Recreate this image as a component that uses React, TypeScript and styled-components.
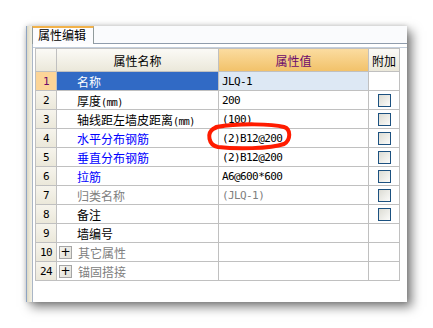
import React from "react";
import styled, { createGlobalStyle } from "styled-components";

const Global = createGlobalStyle`
  html, body { margin: 0; padding: 0; background: #ffffff; }
  body { width: 433px; height: 328px; overflow: hidden; position: relative; }
`;

const cjk = `"Noto Sans CJK SC", "Noto Sans", sans-serif`;
const mono = `"DejaVu Sans Mono", "Liberation Mono", monospace`;

const Window = styled.div`
  position: relative;
  margin: 26px 0 0 26px;
  width: 381px;
  height: 276px;
  display: flex;
  background: #ffffff;
  box-shadow: 5px 5px 10px rgba(0, 0, 0, 0.5), 0 0 5px rgba(0, 0, 0, 0.18);
`;

const SideStrip = styled.div`
  width: 5px;
  border-left: 1px solid #8ea4c2;
  background: linear-gradient(to right, #dcd8c6, #ece9d8 60%, #f2f0e6);
`;

const Main = styled.div`
  flex: 1;
  display: flex;
  flex-direction: column;
`;

const TabBar = styled.div`
  height: 17px;
  display: flex;
  background: #fafbfd;
`;

const Tab = styled.div`
  width: 62px;
  box-sizing: border-box;
  border-left: 1px solid #919b9c;
  border-right: 1px solid #919b9c;
  border-top: 2px solid #f2b24a;
  background: #fcfcfe;
  font-family: ${cjk};
  font-size: 12px;
  line-height: 14px;
  color: #000;
  padding-left: 5px;
  margin-bottom: -1px;
  position: relative;
  z-index: 1;
`;

const Panel = styled.div`
  flex: 1;
  border-top: 1px solid #8f9cac;
  border-left: 1px solid #aab6c6;
  padding-top: 3px;
  display: flex;
  flex-direction: column;
`;

const Inner = styled.div`
  flex: 1;
  border-top: 1px solid #c3cedc;
  padding-left: 2px;
`;

const Grid = styled.div`
  display: grid;
  grid-template-columns: 20px 161px 149px 30px;
  grid-template-rows: 22px repeat(11, 18px);
  gap: 1px;
  background: #c0c0c0;
  border: 1px solid #c0c0c0;
  width: 363px;
`;

type HeadKind = "plain" | "value";

const HeadCell = styled.div<{ $kind?: HeadKind }>`
  display: flex;
  align-items: center;
  justify-content: center;
  font-family: ${cjk};
  font-size: 12px;
  color: ${(p) => (p.$kind === "value" ? "#6c0a6c" : "#000")};
  background: ${(p) =>
    p.$kind === "value"
      ? "linear-gradient(to bottom, #fbdca0, #f2c26a)"
      : "linear-gradient(to bottom, #fbfaf6, #ebe8da)"};
`;

const NumCell = styled.div<{ $sel?: boolean }>`
  display: flex;
  align-items: center;
  justify-content: center;
  font-family: ${mono};
  font-size: 11px;
  letter-spacing: -0.6px;
  color: ${(p) => (p.$sel ? "#6c0a6c" : "#000")};
  background: ${(p) =>
    p.$sel ? "#fcd598" : "linear-gradient(to bottom, #f6f4ec, #ebe8da)"};
`;

type Tone = "black" | "blue" | "gray" | "white";
const toneColor: Record<Tone, string> = {
  black: "#000000",
  blue: "#0000ff",
  gray: "#808080",
  white: "#ffffff",
};

const NameCell = styled.div<{ $tone: Tone; $sel?: boolean; $group?: boolean }>`
  display: flex;
  align-items: center;
  padding-left: ${(p) => (p.$group ? "2px" : "20px")};
  gap: 6px;
  font-family: ${cjk};
  font-size: 12px;
  color: ${(p) => toneColor[p.$tone]};
  background: ${(p) => (p.$sel ? "#316ac5" : "#ffffff")};
  white-space: nowrap;
`;

const Unit = styled.span`
  font-family: ${mono};
  font-size: 10px;
  letter-spacing: -0.6px;
`;

const PlusBox = styled.span`
  width: 11px;
  height: 11px;
  border: 1px solid #a5a5a5;
  background: linear-gradient(135deg, #f4f4f0, #e2e0d8);
  display: flex;
  align-items: center;
  justify-content: center;
  font-family: "DejaVu Sans", sans-serif;
  font-size: 12px;
  line-height: 1;
  color: #000;
`;

const ValueCell = styled.div<{ $tone: Tone; $sel?: boolean }>`
  display: flex;
  align-items: center;
  padding-left: 3px;
  font-family: ${mono};
  font-size: 11px;
  letter-spacing: -0.6px;
  color: ${(p) => toneColor[p.$tone]};
  background: ${(p) => (p.$sel ? "#dde8f4" : "#ffffff")};
  white-space: nowrap;
`;

const ExtraCell = styled.div`
  display: flex;
  align-items: center;
  justify-content: center;
  background: #ffffff;
`;

const Check = styled.span`
  width: 11px;
  height: 11px;
  border: 1px solid #1c5180;
  background: linear-gradient(135deg, #dcdcd4, #fbfbf9);
`;

const Scribble = styled.svg`
  position: absolute;
  left: 200px;
  top: 118px;
  pointer-events: none;
`;

type Row = {
  n: string;
  name: string;
  unit?: string;
  tone: Tone;
  value: string;
  valueTone?: Tone;
  check: boolean;
  sel?: boolean;
  group?: boolean;
};

const rows: Row[] = [
  { n: "1", name: "名称", tone: "white", value: "JLQ-1", check: false, sel: true },
  { n: "2", name: "厚度", unit: "(mm)", tone: "black", value: "200", check: true },
  { n: "3", name: "轴线距左墙皮距离", unit: "(mm)", tone: "black", value: "(100)", check: true },
  { n: "4", name: "水平分布钢筋", tone: "blue", value: "(2)B12@200", check: true },
  { n: "5", name: "垂直分布钢筋", tone: "blue", value: "(2)B12@200", check: true },
  { n: "6", name: "拉筋", tone: "blue", value: "A6@600*600", check: true },
  { n: "7", name: "归类名称", tone: "gray", value: "(JLQ-1)", valueTone: "gray", check: true },
  { n: "8", name: "备注", tone: "black", value: "", check: true },
  { n: "9", name: "墙编号", tone: "black", value: "", check: false },
  { n: "10", name: "其它属性", tone: "gray", value: "", check: false, group: true },
  { n: "24", name: "锚固搭接", tone: "gray", value: "", check: false, group: true },
];

export default function App() {
  return (
    <>
      <Global />
      <Window>
        <SideStrip />
        <Main>
          <TabBar>
            <Tab>属性编辑</Tab>
          </TabBar>
          <Panel>
            <Inner>
              <Grid>
                <HeadCell />
                <HeadCell>属性名称</HeadCell>
                <HeadCell $kind="value">属性值</HeadCell>
                <HeadCell>附加</HeadCell>
                {rows.map((r) => (
                  <React.Fragment key={r.n}>
                    <NumCell $sel={r.sel}>{r.n}</NumCell>
                    <NameCell $tone={r.tone} $sel={r.sel} $group={r.group}>
                      {r.group && <PlusBox>+</PlusBox>}
                      <span>
                        {r.name}
                        {r.unit && <Unit>{r.unit}</Unit>}
                      </span>
                    </NameCell>
                    <ValueCell $tone={r.valueTone ?? "black"} $sel={r.sel}>
                      {r.value}
                    </ValueCell>
                    <ExtraCell>{r.check && <Check />}</ExtraCell>
                  </React.Fragment>
                ))}
              </Grid>
            </Inner>
          </Panel>
        </Main>
      </Window>
      <Scribble width="100" height="40" viewBox="0 0 100 40">
        <path
          d="M16 9 C 40 5, 72 6, 84 9 C 91 11, 91 22, 84 26 C 70 31, 35 31, 18 29 C 8 27, 7 15, 13 11 C 16 9, 20 8, 24 8"
          fill="none"
          stroke="#ff1c00"
          strokeWidth="4"
          strokeLinecap="round"
          strokeLinejoin="round"
        />
      </Scribble>
    </>
  );
}
